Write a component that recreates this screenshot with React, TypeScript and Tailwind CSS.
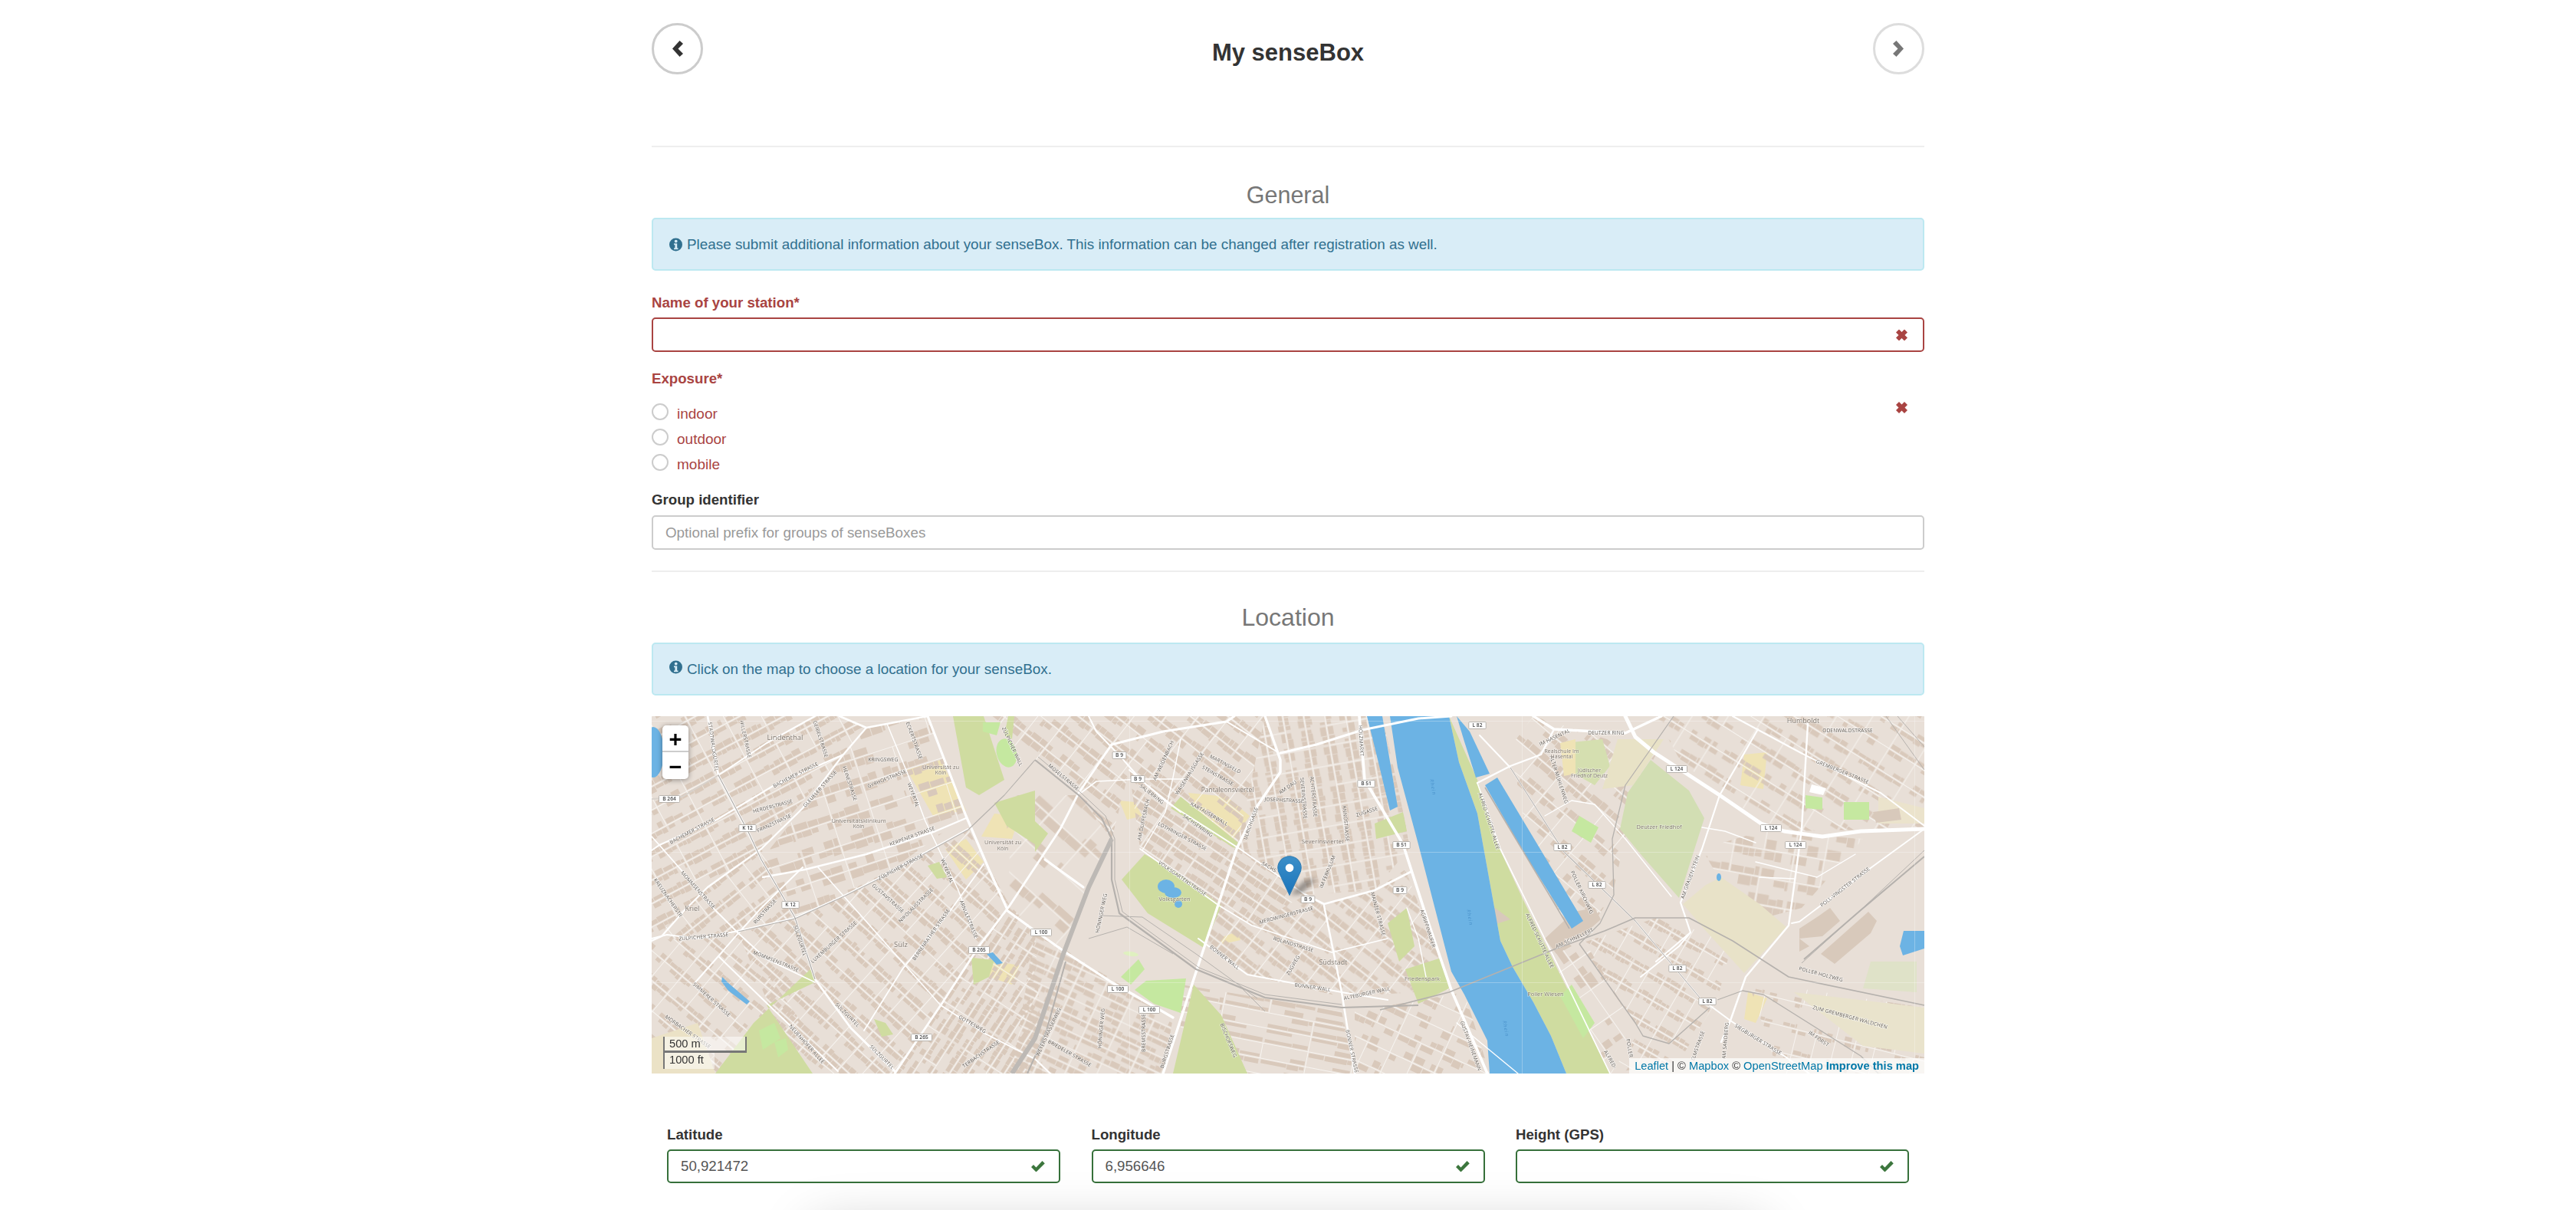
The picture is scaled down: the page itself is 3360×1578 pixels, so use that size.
import React from "react";

type P = [number, number];
type District = { poly: P[]; angle: number; sx: number; sy: number; bw: number; bd: number; density: number };

const districts: District[] = [
  { poly: [[0,0],[250,0],[280,15],[250,50],[143,173],[73,223],[0,293]], angle: -28, sx: 44, sy: 27, bw: 9, bd: 5.5, density: 0.85 },
  { poly: [[280,15],[360,0],[410,130],[295,213],[253,233],[190,263],[143,187],[197,120],[250,50]], angle: -18, sx: 52, sy: 34, bw: 13, bd: 8, density: 0.72 },
  { poly: [[113,283],[187,263],[353,180],[413,147],[467,247],[377,377],[317,466],[245,466],[153,377]], angle: 42, sx: 27, sy: 31, bw: 8, bd: 5.5, density: 0.93 },
  { poly: [[0,293],[113,283],[243,466],[0,466]], angle: 40, sx: 30, sy: 30, bw: 8, bd: 5, density: 0.78 },
  { poly: [[0,293],[73,223],[143,173],[187,263],[113,283]], angle: -38, sx: 26, sy: 30, bw: 8, bd: 5.5, density: 0.88 },
  { poly: [[377,377],[467,247],[500,280],[510,466],[317,466]], angle: -57, sx: 38, sy: 20, bw: 8, bd: 5, density: 0.85 },
  { poly: [[420,0],[800,0],[763,173],[623,70],[600,160],[557,103],[500,57]], angle: 38, sx: 33, sy: 30, bw: 9, bd: 6.5, density: 0.82 },
  { poly: [[460,103],[557,103],[600,160],[570,223],[537,310],[463,253],[467,190]], angle: 42, sx: 60, sy: 45, bw: 20, bd: 9, density: 0.5 },
  { poly: [[623,70],[853,233],[783,273],[743,247],[683,203],[637,173]], angle: 34, sx: 34, sy: 25, bw: 9, bd: 6.5, density: 0.92 },
  { poly: [[783,273],[853,233],[877,245],[943,227],[983,200],[1043,357],[900,366],[777,337],[713,290],[743,247]], angle: 38, sx: 30, sy: 28, bw: 8, bd: 6, density: 0.92 },
  { poly: [[800,0],[953,0],[990,170],[943,227],[853,233],[763,173]], angle: 80, sx: 26, sy: 27, bw: 8, bd: 6, density: 0.95 },
  { poly: [[500,280],[680,393],[667,466],[470,466]], angle: 25, sx: 38, sy: 20, bw: 10, bd: 5.5, density: 0.8 },
  { poly: [[690,350],[900,385],[917,466],[690,466]], angle: 11, sx: 60, sy: 20, bw: 28, bd: 5, density: 0.6 },
  { poly: [[917,385],[1060,360],[1093,466],[917,466]], angle: 25, sx: 32, sy: 28, bw: 12, bd: 7, density: 0.6 },
  { poly: [[1120,40],[1150,0],[1310,50],[1283,100],[1253,233],[1210,297],[1150,200]], angle: 40, sx: 38, sy: 34, bw: 11, bd: 7, density: 0.6 },
  { poly: [[1310,0],[1660,0],[1660,147],[1477,150],[1393,103],[1340,55]], angle: 32, sx: 40, sy: 30, bw: 9, bd: 5, density: 0.68 },
  { poly: [[1370,173],[1447,150],[1580,160],[1500,250],[1425,270]], angle: 10, sx: 40, sy: 36, bw: 12, bd: 10, density: 0.65 },
  { poly: [[1210,297],[1310,263],[1410,293],[1390,370],[1340,450],[1250,466],[1290,410]], angle: 30, sx: 24, sy: 30, bw: 7, bd: 4.5, density: 0.88 },
  { poly: [[1430,345],[1660,380],[1660,466],[1470,466]], angle: 14, sx: 26, sy: 34, bw: 7, bd: 4, density: 0.45 },
  { poly: [[1160,300],[1215,290],[1280,400],[1250,466],[1215,466]], angle: 55, sx: 42, sy: 30, bw: 14, bd: 9, density: 0.35 },
];

function rngFrom(seed: number) {
  let a = seed >>> 0;
  return () => {
    a = (a + 0x6d2b79f5) >>> 0;
    let t = a;
    t = Math.imul(t ^ (t >>> 15), t | 1);
    t ^= t + Math.imul(t ^ (t >>> 7), t | 61);
    return ((t ^ (t >>> 14)) >>> 0) / 4294967296;
  };
}

function build(d: District, seed: number) {
  const r = rngFrom(seed * 7919 + 13);
  const c = d.poly[0];
  const rad = (-d.angle * Math.PI) / 180;
  const rot = d.poly.map(([x, y]) => {
    const dx = x - c[0];
    const dy = y - c[1];
    return [dx * Math.cos(rad) - dy * Math.sin(rad), dx * Math.sin(rad) + dy * Math.cos(rad)];
  });
  const minX = Math.min(...rot.map((p) => p[0]));
  const maxX = Math.max(...rot.map((p) => p[0]));
  const minY = Math.min(...rot.map((p) => p[1]));
  const maxY = Math.max(...rot.map((p) => p[1]));
  let b = "";
  let s = "";
  for (let y = minY; y < maxY; y += d.sy) {
    s += `M${minX.toFixed(0)} ${y.toFixed(1)}H${maxX.toFixed(0)}`;
    for (let x = minX; x < maxX; x += d.sx) {
      if (r() > 0.2) s += `M${x.toFixed(1)} ${y.toFixed(1)}v${d.sy}`;
      for (const row of [0, 1]) {
        let cx = x + 1.6;
        while (cx < x + d.sx - 3) {
          const w = Math.min(d.bw * (0.5 + r()), x + d.sx - 1.6 - cx);
          const h = d.bd * (0.75 + r() * 0.6);
          const yy = row === 0 ? y + 1.5 : y + d.sy - 1.5 - h;
          if (r() < d.density) b += `M${cx.toFixed(1)} ${yy.toFixed(1)}h${w.toFixed(1)}v${h.toFixed(1)}h${(-w).toFixed(1)}z`;
          cx += w + 0.4 + r() * 1;
        }
      }
    }
  }
  return { b, s, c };
}

const blocks = districts.map((d, i) => build(d, i + 1));
const pts = (a: P[]) => a.map((p) => p.join(",")).join(" ");

type Road = { p: P[]; w: number; c?: string };
const W = "#ffffff";
const G = "#b5b1ad";
const roads: Road[] = [
  { p: [[0,175],[10,168],[85,135],[160,90],[250,50]], w: 2.1 },
  { p: [[87,77],[150,35],[213,0]], w: 2.1 },
  { p: [[73,0],[87,77],[127,153],[143,187],[187,263],[213,343],[260,407],[317,463]], w: 2.8 },
  { p: [[280,15],[250,50],[197,120],[143,173],[73,223],[43,253],[13,287],[0,293]], w: 2.2 },
  { p: [[145,210],[200,200],[280,180],[370,150],[410,133]], w: 2.4 },
  { p: [[245,0],[280,15],[360,0]], w: 2.6 },
  { p: [[360,0],[410,130],[440,200],[463,250]], w: 3.2 },
  { p: [[0,290],[20,285],[60,290],[113,280]], w: 2 },
  { p: [[113,280],[187,263],[253,233],[293,213],[353,180],[413,147]], w: 2 },
  { p: [[317,466],[377,377],[427,300],[467,247],[500,197],[533,147],[557,100],[593,47]], w: 2.8 },
  { p: [[0,157],[10,168],[38,200],[83,253],[113,283],[150,317],[213,347]], w: 1.8 },
  { p: [[87,313],[153,377],[243,463]], w: 1.9 },
  { p: [[57,347],[87,313],[113,283],[143,250],[197,197]], w: 1.9 },
  { p: [[307,10],[333,73],[357,137],[400,227],[423,290]], w: 1.5 },
  { p: [[377,377],[433,413],[500,447],[520,466]], w: 1.8 },
  { p: [[277,410],[327,330],[390,253],[433,193]], w: 1.8 },
  { p: [[217,197],[377,377]], w: 1.6 },
  { p: [[463,253],[500,280],[543,310],[600,347],[680,393]], w: 3.2 },
  { p: [[513,187],[563,223]], w: 3.2 },
  { p: [[0,108],[40,105],[87,77]], w: 2, c: "#d8d2cc" },
  { p: [[667,466],[707,343],[763,173],[790,117],[820,73],[820,57],[800,0]], w: 3.4 },
  { p: [[600,37],[667,20],[750,7],[760,0]], w: 3.2 },
  { p: [[593,47],[600,37]], w: 3 },
  { p: [[750,7],[817,47]], w: 2 },
  { p: [[820,48],[867,37],[927,18],[1000,3],[1043,0]], w: 3 },
  { p: [[623,70],[673,113],[767,173],[853,233]], w: 1.9 },
  { p: [[853,233],[877,245],[943,227],[990,203]], w: 2.6 },
  { p: [[637,173],[740,247],[783,273],[887,308],[960,290]], w: 1.7 },
  { p: [[713,290],[777,337],[900,360],[960,370]], w: 2.1 },
  { p: [[877,247],[900,360],[917,466]], w: 2.5 },
  { p: [[923,0],[930,83],[980,167],[1010,260],[1043,357],[1090,466]], w: 3.6 },
  { p: [[610,51],[580,20],[570,0]], w: 2 },
  { p: [[610,51],[640,85],[690,125]], w: 2 },
  { p: [[560,100],[580,85],[640,82],[700,82]], w: 1.7 },
  { p: [[640,175],[670,125],[680,80],[690,30]], w: 1.4 },
  { p: [[1150,0],[1177,17],[1270,22],[1317,0]], w: 3.4 },
  { p: [[1270,0],[1283,27],[1307,47],[1393,103],[1447,140],[1477,150],[1527,157],[1577,150],[1660,147]], w: 5 },
  { p: [[1443,17],[1393,103],[1370,173],[1342,243],[1355,282],[1310,320]], w: 2.2 },
  { p: [[1410,0],[1503,50],[1603,100],[1660,143]], w: 2 },
  { p: [[1508,10],[1500,147],[1493,200],[1483,273],[1427,340],[1407,397],[1395,425]], w: 2.4 },
  { p: [[1487,270],[1497,268],[1583,203],[1660,147]], w: 1.9 },
  { p: [[1380,377],[1407,397],[1477,443],[1510,466]], w: 2 },
  { p: [[1080,25],[1120,67],[1190,177],[1283,267],[1367,367]], w: 2 },
  { p: [[1077,87],[1107,173],[1183,327],[1250,466]], w: 1.7 },
  { p: [[1077,87],[1120,65],[1160,50],[1177,17]], w: 2.4 },
  { p: [[1165,130],[1200,110],[1230,115],[1270,160],[1330,235]], w: 1.4 },
  { p: [[1290,340],[1340,300],[1355,282]], w: 2 },
  { p: [[1440,165],[1400,150],[1370,145]], w: 1.4 },
  { p: [[1440,190],[1520,210],[1570,180]], w: 1.4 },
  { p: [[1445,210],[1490,212]], w: 1.7 },
  { p: [[1130,466],[1050,400]], w: 1.4 },
  { p: [[1010,340],[1000,290],[985,250]], w: 1.4 },
];
const rails: Road[] = [
  { p: [[500,57],[557,103],[587,133],[600,160],[600,213],[610,257],[710,330],[800,367],[900,380],[1000,377]], w: 2.2, c: G },
  { p: [[504,53],[560,100],[592,130],[604,160],[604,213],[614,255],[714,328],[800,363],[900,376]], w: 1, c: G },
  { p: [[470,466],[500,420],[537,310],[570,223],[600,160]], w: 6, c: "#bdb9b5" },
  { p: [[490,466],[515,410],[540,320]], w: 2, c: G },
  { p: [[113,281],[187,264],[253,234],[293,214],[353,181],[413,148],[460,103],[500,57]], w: 1.1, c: G },
  { p: [[87,77],[127,153],[143,187],[187,263],[213,343]], w: 1.1, c: "#aaa6a2" },
  { p: [[950,383],[1040,360],[1180,303],[1243,280],[1283,263],[1353,263],[1410,293],[1483,340],[1660,377]], w: 1.6, c: G },
  { p: [[1333,0],[1303,43],[1270,90],[1253,160],[1255,233],[1237,270],[1210,297]], w: 1.3, c: G },
  { p: [[1210,297],[1283,400],[1293,417],[1327,427],[1380,380]], w: 1.4, c: G },
  { p: [[1390,370],[1423,358],[1450,363],[1577,443],[1600,466]], w: 1.3, c: G },
  { p: [[1503,317],[1577,253],[1660,183]], w: 2, c: G },
  { p: [[1500,322],[1580,250],[1660,175]], w: 1, c: G },
  { p: [[1087,93],[1197,277]], w: 1.6, c: G },
  { p: [[1120,67],[1190,177],[1283,267],[1367,367]], w: 1.1, c: G },
  { p: [[1610,0],[1660,70]], w: 1, c: G },
  { p: [[1625,0],[1660,40]], w: 1, c: G },
  { p: [[585,260],[640,262],[710,310],[790,368]], w: 1, c: G },
  { p: [[570,290],[620,275],[680,310]], w: 1, c: G },
  { p: [[770,355],[800,385]], w: 1, c: G },
];

const Y = "#efe3b5";
const campus: P[][] = [
  [[333,70],[377,57],[410,123],[367,130]],
  [[383,173],[410,160],[433,190],[410,213]],
  [[447,127],[480,130],[470,160],[430,157]],
  [[700,100],[750,105],[780,130],[760,160],[710,125]],
  [[610,110],[630,112],[640,130],[620,135]],
  [[1425,50],[1455,47],[1450,95],[1420,90]],
  [[1430,360],[1455,368],[1440,400],[1425,395]],
  [[420,315],[480,325],[470,350],[425,335]],
  [[740,290],[765,280],[768,292],[745,297]],
];
const parks: { p: P[]; c: string }[] = [
  { p: [[393,0],[433,0],[460,83],[427,103],[410,93]], c: "#cfdca0" },
  { p: [[447,113],[500,97],[500,167],[463,143]], c: "#cfdca0" },
  { p: [[500,137],[517,153],[500,177]], c: "#cfdca0" },
  { p: [[83,466],[133,400],[207,330],[213,347],[150,377],[210,466]], c: "#cfdca0" },
  { p: [[0,420],[60,400],[83,466],[0,466]], c: "#ebe2c6" },
  { p: [[643,180],[613,213],[647,257],[720,302],[743,247],[683,203]], c: "#cfdca0" },
  { p: [[677,120],[690,105],[765,165],[760,172]], c: "#cfdca0" },
  { p: [[707,350],[743,390],[777,466],[680,466]], c: "#cfdca0" },
  { p: [[1040,0],[1053,60],[1077,127],[1107,293],[1123,327],[1150,373],[1173,417],[1193,466],[1250,466],[1183,333],[1137,240],[1100,160],[1077,83]], c: "#cfdca0" },
  { p: [[1303,57],[1353,97],[1373,133],[1340,237],[1290,180],[1263,147],[1273,100]], c: "#d2deb3" },
  { p: [[1190,35],[1240,30],[1250,65],[1230,90],[1195,70]], c: "#d5dfb0" },
  { p: [[1185,35],[1205,30],[1205,75],[1190,78]], c: "#efe3b5" },
  { p: [[1260,30],[1320,30],[1280,90],[1240,95]], c: "#e8e2c6" },
  { p: [[1375,220],[1395,210],[1445,245],[1480,275],[1425,335],[1375,280],[1345,245]], c: "#e8e2c8" },
  { p: [[1600,105],[1660,120],[1660,140],[1600,140]], c: "#ebe3cc" },
  { p: [[1490,360],[1660,380],[1660,440],[1580,430]], c: "#e9e3cc" },
  { p: [[1590,320],[1650,320],[1650,360],[1580,355]], c: "#dfe2c8" },
  { p: [[983,330],[1030,315],[1040,355],[1000,375]], c: "#cfdca0" },
  { p: [[960,270],[985,250],[995,300],[975,320]], c: "#cfdca0" },
  { p: [[943,140],[980,125],[985,150],[945,160]], c: "#cfdca0" },
  { p: [[417,315],[447,318],[440,340],[420,350]], c: "#cfdca0" },
  { p: [[465,0],[473,0],[470,30],[460,25]], c: "#cfdca0" },
  { p: [[612,340],[635,317],[643,330],[625,350]], c: "#c5e8a0" },
  { p: [[630,357],[645,345],[697,342],[690,387],[655,375]], c: "#c5e8a0" },
  { p: [[1505,103],[1527,106],[1527,122],[1505,120]], c: "#c5e8a0" },
  { p: [[1555,112],[1588,112],[1588,135],[1555,135]], c: "#c5e8a0" },
  { p: [[1513,89],[1532,94],[1528,103],[1510,99]], c: "#ffffff" },
  { p: [[432,8],[455,8],[450,25],[432,20]], c: "#c5e8a0" },
  { p: [[140,410],[160,400],[168,420],[145,435]], c: "#c5e8a0" },
  { p: [[160,425],[175,420],[178,435],[165,445]], c: "#c5e8a0" },
  { p: [[1210,130],[1235,145],[1225,165],[1200,150]], c: "#c5e8a0" },
  { p: [[1185,365],[1200,350],[1230,400],[1215,420]], c: "#c5e8a0" },
  { p: [[290,395],[305,400],[315,415],[300,418]], c: "#cfdca0" },
  { p: [[360,195],[375,190],[385,210],[372,212]], c: "#cfdca0" },
];

const water: P[][] = [
  [[963,0],[973,67],[1000,167],[1043,333],[1060,363],[1090,423],[1093,466],[1193,466],[1173,417],[1150,373],[1123,327],[1107,293],[1077,127],[1053,60],[1040,0]],
  [[933,0],[953,0],[973,118],[963,123],[943,40]],
  [[1050,0],[1067,20],[1093,75],[1075,80],[1060,33]],
  [[1087,90],[1103,80],[1163,180],[1215,267],[1200,277],[1137,177]],
  [[1633,280],[1660,280],[1660,303],[1632,312],[1628,300]],
  [[92,340],[100,348],[128,372],[124,376],[100,358],[91,346]],
  [[437,310],[445,308],[458,322],[450,324]],
];

type L = [string, number, number, number];
const streets: L[] = [
  ["STADTWALDGÜRTEL",80,40,82],["HILLERSTRASSE",122,30,78],["GEIBELSTRASSE",220,30,72],["ECKERTSTRASSE",342,32,70],
  ["BACHEMER STRASSE",188,77,-27],["BACHEMER STRASSE",53,150,-28],["KRINGSWEG",302,57,0],["HEINESTRASSE",258,88,72],
  ["GYRHOFSTRASSE",307,82,-22],["WEYERTAL",341,103,70],["GLEUELER STRASSE",220,95,-48],["HERDERSTRASSE",158,118,-15],
  ["FRANZSTRASSE",160,140,-25],["KERPENER STRASSE",340,157,-20],["ZÜLPICHER STRASSE",325,197,-28],["ZÜLPICHER STRASSE",68,288,-5],
  ["MOMMSENSTRASSE",60,227,48],["GUSTAVSTRASSE",308,238,42],["WEYERTAL",385,202,68],["NIKOLAUSSTRASSE",345,247,-45],
  ["ARNULFSTRASSE",413,265,68],["RURSTRASSE",148,255,-48],["SÜLZGÜRTEL",193,293,72],["LUXEMBURGER STRASSE",238,295,-42],
  ["BERRENRATHER STRASSE",365,285,-55],["MOMMSENSTRASSE",162,320,22],["SIMMERER STRASSE",78,370,42],["MORBACHER STRASSE",47,412,35],
  ["SÜLZGÜRTEL",255,390,45],["SÜLZGÜRTEL",300,445,45],["NEUENHÖFER ALLEE",202,428,48],["GOTTESWEG",418,402,30],["TERBACHSTRASSE",430,441,-35],
  ["KREUZNACHERSTR",21,237,55],["ZÜLPICHER WALL",470,40,65],
  ["MOSELSTRASSE",537,80,40],["AM WEIDENBACH",668,58,-65],["WAISENHAUSGASSE",702,75,-58],["MARTINSFELD",748,63,28],["STEINSTRASSE",738,78,30],
  ["SALIERRING",652,102,38],["AM DUFFESBACH",642,135,-78],["KARTÄUSERWALL",727,128,30],["SACHSENRING",712,143,35],["LOTHRINGER STRASSE",692,157,28],
  ["ULRICHGASSE",782,140,-70],["JOSEPHSTRASSE",825,110,3],["AM DAU",830,93,-35],["SEVERINSTRASSE",850,107,85],["ACHTERSTRASSE",863,105,85],
  ["ANNOSTRASSE",905,140,85],["ZUGASSE",933,125,-18],["SACHS",805,197,30],["IM FERKULUM",882,203,-68],["VOLKSGARTENSTRASSE",692,212,35],
  ["HÖNINGER WEG",587,257,-78],["MEROWINGERSTRASSE",828,260,-15],["ROLANDSTRASSE",837,298,17],["BONNER WALL",747,315,38],["ZUGWEG",837,325,-60],
  ["BONNER WALL",862,354,8],["ALTEBURGER WALL",933,362,-12],["HÖNINGER WEG",587,407,-85],["WEYERSTRASSERWEG",518,412,-65],["BRIEDELER STRASSE",545,440,30],
  ["BREMSSTRASSE",642,413,-90],["BURGSTRASSE",673,437,-72],["BISCHOFSWEG",752,423,68],["BONNER STRASSE",913,437,78],["MAINZER STRASSE",947,258,75],
  ["HOLZMARKT",925,32,87],["ALFRED-SCHÜTTE-ALLEE",1092,137,72],["ALFRED-SCHÜTTE-ALLEE",1158,293,65],["AGRIPPINAUFER",1012,277,72],["IM HASENTAL",1178,28,-25],
  ["DEUTZER RING",1245,22,0],["ALTER MÜHLENWEG",1183,83,72],["POLLER KIRCHWEG",1213,230,65],["AM SCHNELLERT",1204,290,-25],["AM GRAUEN STEIN",1355,210,-70],
  ["GUSTAV-HEINEMANN",1068,430,70],["ALFRED-",1250,448,60],["POLLER",1275,433,80],
  ["ODENWALDSTRASSE",1560,19,0],["GREMBERGER STRASSE",1553,73,22],["POLL-VINGSTER STRASSE",1557,223,-38],["POLLER HOLZWEG",1525,337,15],
  ["ZUM GREMBERGER WÄLDCHEN",1563,393,15],["IM FORST",1522,421,35],["SIEGBURGER STRASSE",1443,422,32],["AM SANDBERG",1401,423,-85],["ELMSTRASSE",1365,430,-70],
];
const places: [string, number, number, number][] = [
  ["Lindenthal",174,31,9.5],["Universitätsklinikum",270,139,7.5],["Köln",270,146,7],["Universität zu",377,69,7.5],["Köln",377,76,7],
  ["Universität zu",458,167,7.5],["Köln",458,175,7],["Kriel",53,254,9],["Sülz",325,301,9.5],["Pantaleonsviertel",751,99,8.5],["Severinsviertel",875,166,8],
  ["Volksgarten",682,241,7.5],["Südstadt",889,324,9],["Realschule Im",1187,48,7],["Hasental",1187,55,7],["Jüdischer",1223,73,7],["Friedhof Deutz",1223,80,7],
  ["Deutzer Friedhof",1314,147,7.5],["Friedenspark",1005,345,7.5],["Poller Wiesen",1166,365,7.5],["Humboldt",1502,9,9],
];
const shields: [string, number, number][] = [
  ["B 264",23,108],["K 12",125,146],["K 12",181,246],["B 265",427,305],["B 265",352,419],["L 100",508,282],["B 9",610,51],["B 9",634,82],
  ["L 100",608,356],["L 100",649,383],["B 9",856,239],["B 9",976,227],["B 51",932,88],["B 51",978,168],["L 82",1077,12],["L 82",1188,171],
  ["L 82",1233,220],["L 82",1338,329],["L 82",1377,372],["L 124",1337,69],["L 124",1460,146],["L 124",1492,168],
];

function MapArt() {
  return (
    <svg viewBox="0 0 1660 466" className="block h-full w-full font-['Open_Sans',sans-serif]">
      <defs>
        {districts.map((d, i) => (
          <clipPath id={`dist${i}`} key={i}>
            <polygon points={pts(d.poly)} />
          </clipPath>
        ))}
        <linearGradient id="pinfill" x1="0" x2="0" y1="0" y2="1">
          <stop offset="0" stopColor="#3c8fc8" />
          <stop offset="1" stopColor="#1a74bb" />
        </linearGradient>
        <filter id="pinblur" x="-50%" y="-50%" width="200%" height="200%">
          <feGaussianBlur stdDeviation="3" />
        </filter>
      </defs>
      <rect width="1660" height="466" fill="#e8dfd7" />
      <g className="blur-[0.45px]">
        {campus.map((p, i) => (
          <polygon key={i} points={pts(p)} fill={Y} />
        ))}
        {districts.map((d, i) => (
          <g key={i} clipPath={`url(#dist${i})`}>
            <g transform={`translate(${blocks[i].c[0]} ${blocks[i].c[1]}) rotate(${d.angle})`}>
              <path d={blocks[i].b} fill="#d9c9bb" />
              <path d={blocks[i].s} stroke="#f7f4f0" strokeWidth="1" fill="none" />
            </g>
          </g>
        ))}
        {parks.map((k, i) => (
          <polygon key={i} points={pts(k.p)} fill={k.c} />
        ))}
        <polygon points="1040,267 1100,250 1120,265 1060,285" fill="#d8c9bb" />
        <polygon points="1203,255 1230,250 1238,265 1210,290 1190,290 1200,300 1180,310 1165,290" fill="#d8c9bb" />
        <polygon points="1523,260 1537,250 1550,267 1527,287 1497,290 1510,300 1497,307 1497,277" fill="#d8c9bb" />
        <polygon points="1525,310 1587,255 1598,267 1590,283 1543,323" fill="#d8c9bb" />
        <polygon points="1593,125 1627,120 1630,135 1597,139" fill="#d8c9bb" />
        {water.map((p, i) => (
          <polygon key={i} points={pts(p)} fill="#6cb3e4" />
        ))}
        <ellipse cx="2" cy="47" rx="14" ry="33" fill="#6cb3e4" />
        <ellipse cx="671" cy="222" rx="11" ry="9" fill="#6cb3e4" />
        <ellipse cx="680" cy="230" rx="11" ry="7" fill="#6cb3e4" />
        <ellipse cx="687" cy="245" rx="5" ry="5" fill="#6cb3e4" />
        <ellipse cx="1392" cy="210" rx="3" ry="5" fill="#6cb3e4" />
        <ellipse cx="625" cy="310" rx="10" ry="3" fill="#dff0c0" transform="rotate(8 625 310)" />
        <ellipse cx="463" cy="48" rx="13" ry="19" fill="#c5e8a0" transform="rotate(-15 463 48)" />
        {roads.map((r, i) => (
          <polyline key={i} points={pts(r.p)} fill="none" stroke={r.c ?? W} strokeWidth={r.w} strokeLinejoin="round" strokeLinecap="round" />
        ))}
        {rails.map((r, i) => (
          <polyline key={i} points={pts(r.p)} fill="none" stroke={r.c} strokeWidth={r.w} strokeLinejoin="round" />
        ))}
      </g>
      <g stroke="#ffffff" strokeOpacity="0.28" strokeWidth="1">
        <path d="M0 6.5H1660M0 177.5H1660M0 347.5H1660M623.5 0V466M1135.5 0V466M1647.5 0V466" />
      </g>
      {streets.map(([t, x, y, a], i) => (
        <text
          key={i}
          x={x}
          y={y}
          transform={`rotate(${a} ${x} ${y})`}
          textAnchor="middle"
          dominantBaseline="middle"
          fontSize="6.6"
          letterSpacing="0.15"
          fill="#5d5750"
          stroke="#ffffff"
          strokeOpacity="0.65"
          strokeWidth="1.4"
          paintOrder="stroke"
        >
          {t}
        </text>
      ))}
      {places.map(([t, x, y, s], i) => (
        <text key={i} x={x} y={y} textAnchor="middle" fontSize={s} fill="#7f766d" stroke="#ffffff" strokeOpacity="0.5" strokeWidth="1.2" paintOrder="stroke">
          {t}
        </text>
      ))}
      {([["Rhein",1017,93],["Rhein",1065,263],["Rhein",1112,408]] as [string, number, number][]).map(([t, x, y], i) => (
        <text key={i} x={x} y={y} transform={`rotate(80 ${x} ${y})`} textAnchor="middle" fontSize="6.5" letterSpacing="1" fill="#4b93cc" fontStyle="italic">
          {t}
        </text>
      ))}
      {shields.map(([t, x, y], i) => {
        const w = t.length * 4.6 + 4;
        return (
          <g key={i}>
            <rect x={x - w / 2} y={y - 4.5} width={w} height="9" rx="1" fill="#ffffff" stroke="#a9a49e" strokeWidth="0.8" />
            <text x={x} y={y + 0.3} textAnchor="middle" dominantBaseline="middle" fontSize="6.6" fontWeight="600" fill="#444444">
              {t}
            </text>
          </g>
        );
      })}
      <polygon points="832,233 852,214 868,212 846,232" fill="#000000" opacity="0.38" filter="url(#pinblur)" />
      <svg x="815.5" y="182" width="33" height="52" viewBox="0 0 25 41" overflow="visible">
        <path d="M12.5 0.5C5.9 0.5 0.5 5.9 0.5 12.5c0 2.4.7 4.6 1.9 6.5L12.5 40.5l10.1-21.5c1.2-1.9 1.9-4.1 1.9-6.5C24.5 5.9 19.1 0.5 12.5 0.5z" fill="url(#pinfill)" stroke="#2f7cb3" strokeWidth="0.8" />
        <circle cx="12.5" cy="12.5" r="4.2" fill="#ffffff" />
      </svg>
    </svg>
  );
}

function Chevron({ dir, color }: { dir: "l" | "r"; color: string }) {
  return (
    <svg width="16" height="21" viewBox="0 0 16 21" className={dir === "r" ? "block -scale-x-100" : "block"}>
      <polygon points="10.5,0 15,4 8.5,10.5 15,17 10.5,21 1,10.5" fill={color} />
    </svg>
  );
}
function XIcon({ className }: { className: string }) {
  return (
    <svg width="15" height="15" viewBox="0 0 15 15" className={className}>
      <polygon points="4,0 7.5,3.5 11,0 15,4 11.5,7.5 15,11 11,15 7.5,11.5 4,15 0,11 3.5,7.5 0,4" fill="#a94442" />
    </svg>
  );
}
function Check() {
  return (
    <svg width="18" height="15" viewBox="0 0 18 15" className="absolute right-[20px] top-1/2 -translate-y-1/2">
      <polygon points="0,8.5 3,5.5 6.5,9 14.5,0.5 17.8,3.8 6.5,15" fill="#3c763d" />
    </svg>
  );
}
function Info({ className }: { className?: string }) {
  return (
    <svg width="17" height="18" viewBox="0 0 17 18" className={`shrink-0 ${className ?? ""}`}>
      <circle cx="8.5" cy="9" r="8.5" fill="#31708f" />
      <circle cx="8.7" cy="4.6" r="1.9" fill="#d9edf7" />
      <path d="M6 7.5h4.2v6h1.3v1.7H6v-1.7h1.4V9.2H6z" fill="#d9edf7" />
    </svg>
  );
}
function Alert({ text, className, iconClass }: { text: string; className: string; iconClass?: string }) {
  return (
    <div className={`flex h-[69px] items-center gap-[6px] rounded-[5px] border-2 border-[#bce8f1] bg-[#d9edf7] px-[21px] text-[18.87px] text-[#31708f] ${className}`}>
      <Info className={iconClass} />
      <span className="mt-[2px]">{text}</span>
    </div>
  );
}
function Coord({ label, value }: { label: string; value: string }) {
  return (
    <div className="w-[513px]">
      <div className="h-[27px] text-[18.67px] font-bold leading-[27px] text-[#333]">{label}</div>
      <div className="relative mt-[6px] h-[44px]">
        <input readOnly defaultValue={value} className="h-full w-full rounded-[5px] border-2 border-[#36703a] bg-transparent px-[16px] text-[18.67px] text-[#555] outline-none" />
        <Check />
      </div>
    </div>
  );
}
function Radio({ label }: { label: string }) {
  return (
    <div className="flex h-[33px] items-start gap-[11px]">
      <span className="mt-0 h-[22px] w-[22px] rounded-full border-2 border-[#ccc] bg-white" />
      <span className="mt-[1px] text-[19px] leading-[26px] text-[#a94442]">{label}</span>
    </div>
  );
}

export default function App() {
  return (
    <div className="relative h-[1578px] overflow-hidden bg-white font-['Liberation_Sans',Arial,sans-serif] text-[18.67px] text-[#333]">
      <main className="mx-auto w-[1660px]">
        <header className="flex h-[190px] items-start justify-between pt-[30px]">
          <button className="flex h-[67px] w-[67px] items-center justify-center rounded-full border-[3px] border-[#ccc] bg-white">
            <Chevron dir="l" color="#333333" />
          </button>
          <h1 className="mt-[19px] text-[31px] font-bold leading-[40px] text-[#333]">My senseBox</h1>
          <button className="flex h-[67px] w-[67px] items-center justify-center rounded-full border-[3px] border-[#ddd] bg-white">
            <Chevron dir="r" color="#777777" />
          </button>
        </header>
        <hr className="h-[2px] border-0 bg-[#eee]" />
        <h2 className="mt-[42px] h-[40px] text-center text-[30.5px] font-normal leading-[40px] text-[#777]">General</h2>
        <Alert className="mt-[10px]" text="Please submit additional information about your senseBox. This information can be changed after registration as well." />
        <label className="mt-[29px] block h-[26px] text-[18.67px] font-bold leading-[26px] text-[#a94442]">Name of your station*</label>
        <div className="relative mt-[6px] h-[45px]">
          <input className="h-full w-full rounded-[5px] border-2 border-[#a94442] bg-white px-[16px] outline-none" />
          <XIcon className="absolute right-[22px] top-1/2 -translate-y-1/2" />
        </div>
        <label className="mt-[22px] block h-[26px] text-[18.67px] font-bold leading-[26px] text-[#a94442]">Exposure*</label>
        <div className="relative mt-[19px] h-[99px]">
          <Radio label="indoor" />
          <Radio label="outdoor" />
          <Radio label="mobile" />
          <XIcon className="absolute right-[22px] top-[-2px]" />
        </div>
        <label className="mt-[14px] block h-[26px] text-[18.67px] font-bold leading-[26px] text-[#333]">Group identifier</label>
        <input placeholder="Optional prefix for groups of senseBoxes" className="mt-[7px] block h-[45px] w-full rounded-[5px] border-2 border-[#ccc] bg-white px-[16px] text-[18.8px] text-[#555] outline-none placeholder:text-[#999]" />
        <hr className="mt-[27px] h-[2px] border-0 bg-[#eee]" />
        <h2 className="mt-[39px] h-[40px] text-center text-[32px] font-normal leading-[40px] text-[#777]">Location</h2>
        <Alert className="mt-[13px]" iconClass="-mt-[5px]" text="Click on the map to choose a location for your senseBox." />
        <div className="relative mt-[27px] h-[466px] overflow-hidden">
          <MapArt />
          <div className="absolute left-[14px] top-[12px] flex h-[70px] w-[34px] flex-col overflow-hidden rounded-[5px] bg-white shadow-[0_1px_7px_rgba(0,0,0,0.4)]">
            <span className="flex h-[35px] items-center justify-center border-b-2 border-[#ccc] pt-[3px] text-[29px] font-bold leading-none text-black">+</span>
            <span className="flex h-[35px] items-center justify-center pt-[3px] text-[29px] font-bold leading-none text-black">−</span>
          </div>
          <div className="absolute bottom-[6px] left-[15px] flex flex-col text-[14.67px] leading-[18px] text-[#333]">
            <div className="h-[21px] w-[109px] border-x-2 border-b-[3px] border-[#777] bg-white/50 pl-[6px]">500 m</div>
            <div className="h-[21px] w-[67px] border-l-2 border-solid bg-white/50 pl-[6px] [border-left-color:#777]">1000 ft</div>
          </div>
          <div className="absolute bottom-0 right-0 h-[20px] bg-white/70 px-[7px] text-[14.67px] leading-[20px] text-[#333]">
            <span className="text-[#0078a8]">Leaflet</span> | © <span className="text-[#0078a8]">Mapbox</span> © <span className="text-[#0078a8]">OpenStreetMap</span> <b className="text-[#0078a8]">Improve this map</b>
          </div>
        </div>
        <div className="mt-[66px] flex justify-between px-[20px]">
          <Coord label="Latitude" value="50,921472" />
          <Coord label="Longitude" value="6,956646" />
          <Coord label="Height (GPS)" value="" />
        </div>
      </main>
      <div className="pointer-events-none absolute left-[1060px] top-[1600px] h-[100px] w-[1240px] bg-[#eee] shadow-[0_0_70px_rgba(0,0,0,0.22)]" />
    </div>
  );
}
